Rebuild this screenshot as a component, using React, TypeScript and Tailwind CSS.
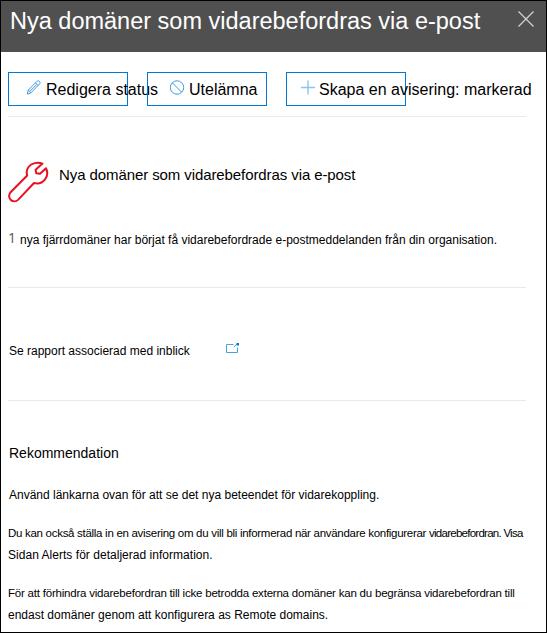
import type { ReactNode } from "react";

function Line({ className, children }: { className: string; children: ReactNode }) {
  return <div className={`whitespace-nowrap ${className}`}>{children}</div>;
}

function ActionButton({ icon, label, className }: { icon: ReactNode; label: string; className: string }) {
  return (
    <button
      type="button"
      className={`flex h-[34px] w-[120px] items-start border border-[#0078d4] pt-[7px] text-left text-[16px] leading-[18px] whitespace-nowrap ${className}`}
    >
      {icon}
      <span className="pt-px">{label}</span>
    </button>
  );
}

function PencilIcon() {
  return (
    <svg className="mr-1 h-4 w-4 shrink-0" viewBox="0 0 16 16" fill="none" stroke="#2b8fdc" strokeWidth="0.9">
      <path d="M1.300 14.100l1-4.100L10.900 1.400c.8-.8 1.900-.7 2.600 0s.8 1.800 0 2.600L5 12.800zM2.300 10l2.700 2.800M9.500 2.800l2.700 2.800M4.200 11l6.500-6.500" />
    </svg>
  );
}

function BlockIcon() {
  return (
    <svg className="mr-1 h-4 w-4 shrink-0" viewBox="0 0 16 16" fill="none" stroke="#2b8fdc" strokeWidth="0.9">
      <circle cx="8" cy="7.500" r="6.700" />
      <path d="M3.300 2.800l9.400 9.400" />
    </svg>
  );
}

function PlusIcon() {
  return (
    <svg className="mr-1 h-[15px] w-[14px] shrink-0" viewBox="0 0 14 15" fill="none" stroke="#8fc3ee" strokeWidth="1.400">
      <path d="M7 0.500v14M0 7.500h14" />
    </svg>
  );
}

function WrenchIcon() {
  return (
    <svg className="h-[42px] w-[42px] shrink-0" viewBox="0 0 42 42" fill="none" stroke="#e81123" strokeWidth="2" strokeLinejoin="round">
      <path d="M34.500 2.600C29.500.800 23.500 2 20.500 6c-2 2.700-2.200 5.500-1.300 8.500L2.800 31c-2.200 2.200-2.200 5.600-.200 7.700 2.200 2.100 5.500 2.100 7.700-.1L26 22c4.200 1 8.300-.200 10.900-3.400 2.600-3.300 3-7.500 1.100-11.400L32 12.800l-3.700-.6-.700-3.500z" />
    </svg>
  );
}

function OpenIcon() {
  return (
    <svg className="h-3 w-[15px]" viewBox="0 0 15 12" fill="none" stroke="#4aa3df" strokeWidth="1">
      <path d="M8.500 2.500h-7v8h11v-5M9 5l3-3" />
      <path d="M11.500 1h2.500v2.500h-2.500z" fill="#0078d4" stroke="none" />
    </svg>
  );
}

export default function App() {
  return (
    <div className="h-[633px] w-[547px] overflow-hidden border border-black bg-white font-['Liberation_Sans',Arial,sans-serif] text-black">
      <header className="flex h-[51px] items-start justify-between bg-[#505050] pr-3 pl-[9px]">
        <h1 className="pt-[7px] text-[23.5px] leading-[26px] whitespace-nowrap text-white">
          Nya domäner som vidarebefordras via e-post
        </h1>
        <button type="button" aria-label="Stäng" className="mt-[10px]">
          <svg className="h-4 w-4" viewBox="0 0 16 16" fill="none" stroke="#d4d4d4" strokeWidth="1.200">
            <path d="M0.500 0.500l15 15M15.500 0.500l-15 15" />
          </svg>
        </button>
      </header>
      <main className="flex flex-col pr-5 pl-[7px]">
        <div className="flex gap-[19px] border-b border-[#eaeaea] pt-5 pb-[10px]">
          <ActionButton icon={<PencilIcon />} label="Redigera status" className="pl-[17px]" />
          <ActionButton icon={<BlockIcon />} label="Utelämna" className="pl-[21px]" />
          <ActionButton icon={<PlusIcon />} label="Skapa en avisering: markerad" className="pl-[14px]" />
        </div>
        <section className="h-[171px] border-b border-[#eaeaea] pt-[44px]">
          <div className="flex gap-[9px]">
            <WrenchIcon />
            <Line className="pt-[5px] text-[15px] leading-[18px] tracking-[-0.09px]">
              Nya domäner som vidarebefordras via e-post
            </Line>
          </div>
          <div className="mt-[26px] flex">
            <Line className="w-[12px] font-['Open_Sans',sans-serif] text-[14px] leading-[18px] text-[#555]">1</Line>
            <Line className="pt-[3px] text-[12px] leading-4">
              nya fjärrdomäner har börjat få vidarebefordrade e-postmeddelanden från din organisation.
            </Line>
          </div>
        </section>
        <section className="flex h-[113px] border-b border-[#eaeaea] pt-[54px]">
          <Line className="w-[217px] pt-[1px] pl-[1px] text-[12px] leading-4">Se rapport associerad med inblick</Line>
          <OpenIcon />
        </section>
        <section className="pt-[43px] text-[12px] leading-4">
          <Line className="pl-[1px] text-[14px] leading-[18px]">Rekommendation</Line>
          <Line className="mt-[25px] pl-px">Använd länkarna ovan för att se det nya beteendet för vidarekoppling.</Line>
          <Line className="mt-[22px] text-[11.5px] tracking-[-0.29px]">
            Du kan också ställa in en avisering om du vill bli informerad när användare konfigurerar{" "}
            <span className="tracking-[-0.74px]">vidarebefordran. Visa</span>
          </Line>
          <Line className="mt-[6px] tracking-[0.03px]">Sidan Alerts för detaljerad information.</Line>
          <Line className="mt-[22px] text-[11.5px] tracking-[-0.21px]">
            För att förhindra vidarebefordran till icke betrodda externa domäner kan du begränsa vidarebefordran till
          </Line>
          <Line className="mt-[6px]">endast domäner genom att konfigurera as Remote domains.</Line>
        </section>
      </main>
    </div>
  );
}
